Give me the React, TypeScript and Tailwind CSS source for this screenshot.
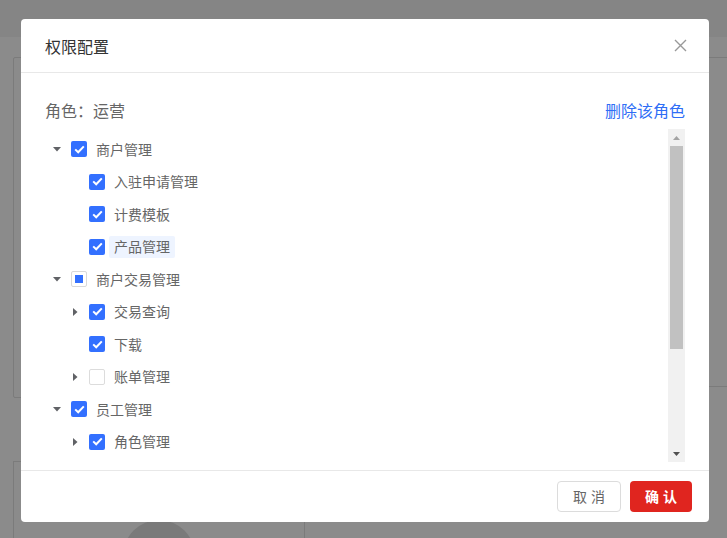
import { useState } from "react"

type Node = {
	label: string
	level: number
	caret?: "down" | "right"
	state: "checked" | "half" | "none"
	active?: boolean
}

const nodes: Node[] = [
	{ label: "商户管理", level: 0, caret: "down", state: "checked" },
	{ label: "入驻申请管理", level: 1, state: "checked" },
	{ label: "计费模板", level: 1, state: "checked" },
	{ label: "产品管理", level: 1, state: "checked", active: true },
	{ label: "商户交易管理", level: 0, caret: "down", state: "half" },
	{ label: "交易查询", level: 1, caret: "right", state: "checked" },
	{ label: "下载", level: 1, state: "checked" },
	{ label: "账单管理", level: 1, caret: "right", state: "none" },
	{ label: "员工管理", level: 0, caret: "down", state: "checked" },
	{ label: "角色管理", level: 1, caret: "right", state: "checked" },
]

function Caret({ dir }: { dir?: "down" | "right" }) {
	if (!dir) return <span className="w-[14px] h-[14px]" />
	return (
		<span className="w-[14px] h-[14px] flex items-center justify-center">
			{dir === "down" ? (
				<svg width="8" height="5" viewBox="0 0 8 5"><path d="M0 0h8L4 4.5z" fill="#606266" /></svg>
			) : (
				<svg width="5" height="8" viewBox="0 0 5 8"><path d="M0 0v8l4.5-4z" fill="#606266" /></svg>
			)}
		</span>
	)
}

function Check({ state }: { state: Node["state"] }) {
	if (state === "checked")
		return (
			<span className="w-[16px] h-[16px] rounded-[2px] bg-[#3370ff] flex items-center justify-center shrink-0">
				<svg width="11" height="9" viewBox="0 0 11 9">
					<path d="M1.2 4.4l3 2.9L9.8 1.4" stroke="#fff" strokeWidth="2" fill="none" />
				</svg>
			</span>
		)
	if (state === "half")
		return (
			<span className="w-[16px] h-[16px] rounded-[2px] border border-[#d9d9d9] bg-white flex items-center justify-center shrink-0">
				<span className="w-[8px] h-[8px] bg-[#3370ff]" />
			</span>
		)
	return <span className="w-[16px] h-[16px] rounded-[2px] border border-[#dcdcdc] bg-white shrink-0" />
}

export default function App() {
	const [open] = useState(true)

	return (
		<div
			className="relative w-[727px] h-[538px] overflow-hidden bg-[#8b8b8b]"
			style={{ fontFamily: '"Noto Sans CJK SC", "Noto Sans", sans-serif' }}
		>
			{/* page behind the mask */}
			<div className="h-[37px] bg-[#858585]" />
			<div className="flex pl-[13px] pt-[20px]">
				<div className="w-[627px] h-[341px] border border-[#7b7b7b] rounded-[2px]" />
				<div className="flex-1 h-[330px] border-t border-b border-[#7b7b7b]" />
			</div>
			<div className="flex pl-[13px] pt-[63px]">
				<div className="w-[291px] h-[80px] border-l border-t border-[#7b7b7b] flex justify-center">
					<div className="mt-[58px] w-[72px] h-[72px] rounded-full bg-[#7a7a7a]" />
				</div>
				<div className="flex-1 h-[80px] border-l border-[#7b7b7b]" />
			</div>

			{open && (
				<div className="absolute left-[21px] top-[19px] w-[688px] h-[503px] bg-white rounded-[4px] flex flex-col">
					{/* Header */}
					<div className="h-[54px] shrink-0 border-b border-[#e8e8e8] flex items-center justify-between pl-[24px] pr-[22px]">
						<span className="text-[16px] text-[#333] leading-none">权限配置</span>
						<svg width="13" height="13" viewBox="0 0 13 13">
							<path d="M1 1l11 11M12 1L1 12" stroke="#999" strokeWidth="1.4" />
						</svg>
					</div>

					{/* Body */}
					<div className="px-[24px] pt-[26px] flex flex-col flex-1">
						<div className="h-[22px] flex items-center justify-between text-[16px] leading-none">
							<span className="text-[#666]">角色：运营</span>
							<span className="text-[#2f6ef6]">删除该角色</span>
						</div>

						<div className="mt-[8px] h-[333px] flex">
							<div className="flex-1 pt-[4px] pl-[5px]">
								{nodes.map((n) => (
									<div
										key={n.label}
										className="h-[32.5px] flex items-center"
										style={{ paddingLeft: n.level * 18 }}
									>
										<Caret dir={n.caret} />
										<span className="ml-[7px]" />
										<Check state={n.state} />
										<span
											className={`ml-[4px] px-[5px] h-[22px] flex items-center rounded-[2px] text-[14px] text-[#666] ${
												n.active ? "bg-[#eef4ff]" : ""
											}`}
										>
											{n.label}
										</span>
									</div>
								))}
							</div>

							{/* scrollbar */}
							<div className="w-[17px] bg-[#f1f1f1] flex flex-col items-center">
								<div className="h-[17px] flex items-center justify-center">
									<svg width="7" height="4" viewBox="0 0 7 4"><path d="M0 4h7L3.5 0z" fill="#a3a3a3" /></svg>
								</div>
								<div className="w-[13px] h-[203px] bg-[#c1c1c1]" />
								<div className="flex-1" />
								<div className="h-[17px] flex items-center justify-center">
									<svg width="7" height="4" viewBox="0 0 7 4"><path d="M0 0h7L3.5 4z" fill="#505050" /></svg>
								</div>
							</div>
						</div>
					</div>

					{/* Footer */}
					<div className="h-[52px] shrink-0 border-t border-[#e8e8e8] flex items-start justify-end gap-[9px] pt-[10px] pr-[17px]">
						<button className="w-[64px] h-[31px] rounded-[4px] border border-[#dcdcdc] bg-white text-[14px] text-[#666] tracking-[4px] pl-[4px]">
							取消
						</button>
						<button className="w-[62px] h-[31px] rounded-[4px] bg-[#e0251f] text-[14px] text-white font-bold tracking-[4px] pl-[4px]">
							确认
						</button>
					</div>
				</div>
			)}
		</div>
	)
}
